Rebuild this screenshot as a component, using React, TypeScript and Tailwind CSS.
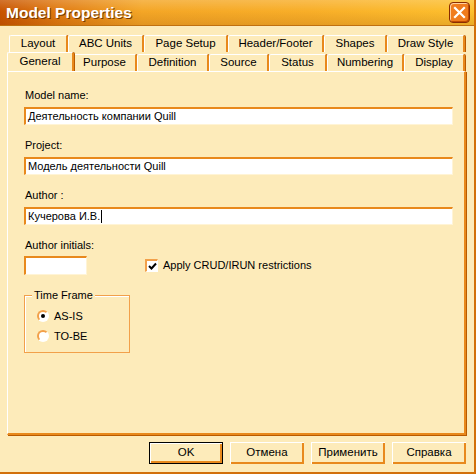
import { useState } from 'react';

const ROW1 = [
    { label: 'Layout', w: 'w-[59px]' },
    { label: 'ABC Units', w: 'w-[76px]' },
    { label: 'Page Setup', w: 'w-[84px]' },
    { label: 'Header/Footer', w: 'w-[96px]' },
    { label: 'Shapes', w: 'w-[63px]' },
    { label: 'Draw Style', w: 'w-[78px]' },
];

const ROW2 = [
    { label: 'General', w: 'w-[67px]' },
    { label: 'Purpose', w: 'w-[64px]' },
    { label: 'Definition', w: 'w-[72px]' },
    { label: 'Source', w: 'w-[60px]' },
    { label: 'Status', w: 'w-[58px]' },
    { label: 'Numbering', w: 'w-[77px]' },
    { label: 'Display', w: 'w-[61px]' },
];

function Tab({ label, w, active }: { label: string; w: string; active?: boolean }) {
    return (
        <div
            className={`${w} ${active ? 'h-[19px] z-10 -mr-[1px]' : 'h-[17px]'} flex items-center justify-center bg-[#FDEBBA] border-t border-l border-white border-r-2 border-r-[#E8891D] rounded-tl-[2px] rounded-tr-[2px] shadow-[1px_0_0_#B85A00] text-[11.5px] text-black leading-none`}
        >
            {label}
        </div>
    );
}

function Field({ label, value, caret }: { label: string; value: string; caret?: boolean }) {
    return (
        <div className="flex flex-col">
            <div className="h-[13px] leading-[13px] pl-[1px]">{label}</div>
            <div className="mt-[5px] h-[18px] w-[429px] bg-white border-t-2 border-l-2 border-[#E8891D] border-r border-b border-r-[#FFF4D6] border-b-[#FFF4D6] flex items-center pl-[2px]">
                {value}
                {caret && <span className="inline-block w-[1px] h-[13px] bg-black ml-[1px]" />}
            </div>
        </div>
    );
}

function Radio({ checked, label }: { checked?: boolean; label: string }) {
    return (
        <div className="flex items-center h-[14px]">
            <div className="w-[12px] h-[12px] rounded-full bg-white border-2 border-[#F2A04A] border-b-white border-r-white flex items-center justify-center">
                {checked && <div className="w-[4px] h-[4px] rounded-full bg-black" />}
            </div>
            <span className="ml-[5px]">{label}</span>
        </div>
    );
}

export default function App() {
    const [crud, setCrud] = useState(true);

    return (
        <div className="w-[476px] h-[474px] bg-[#FDEBBA] flex flex-col font-['Liberation_Sans',Arial,sans-serif] text-[11px] text-black overflow-hidden border-r-2 border-r-[#D2700A] border-b-2 border-b-[#D2700A]">
            {/* title bar */}
            <div className="relative h-[26px] shrink-0 bg-[linear-gradient(to_right,#C85400_0%,#E07A10_12%,#F4A626_30%,#F8AE28_65%,#FDC02E_100%)] flex items-center border-b border-b-[#C07010]">
                <div className="absolute inset-0 bg-[linear-gradient(to_bottom,rgba(255,255,255,0.18),rgba(255,255,255,0)_45%,rgba(120,50,0,0.15))]" />
                <span className="relative ml-[6px] text-[15.5px] font-bold text-white [text-shadow:1px_1px_0_#7A3A00]">Model Properties</span>
                <div className="absolute right-[4px] top-[2px] w-[21px] h-[21px] rounded-[4px] bg-[#F07C1E] border border-[#8A2C00] shadow-[inset_1px_1px_0_#FFD0A0,inset_-1px_-1px_0_#C04A00] flex items-center justify-center">
                    <svg width="13" height="13" viewBox="0 0 13 13">
                        <path d="M2 2 L11 11 M11 2 L2 11" stroke="white" strokeWidth="2.2" strokeLinecap="square" />
                    </svg>
                </div>
            </div>

            {/* tabs */}
            <div className="mt-[9px] ml-[9px] flex">
                {ROW1.map((t) => (
                    <Tab key={t.label} label={t.label} w={t.w} />
                ))}
            </div>
            <div className="ml-[7px] flex items-end h-[19px]">
                {ROW2.map((t, i) => (
                    <Tab key={t.label} label={t.label} w={t.w} active={i === 0} />
                ))}
            </div>

            {/* panel */}
            <div className="ml-[7px] w-[459px] h-[364px] border-t border-l border-white border-r-2 border-b-2 border-r-[#E8891D] border-b-[#E8891D] shadow-[1px_1px_0_#B85A00] pl-[16px] pt-[17px] flex flex-col">
                <Field label="Model name:" value="Деятельность компании Quill" />
                <div className="mt-[14px]">
                    <Field label="Project:" value="Модель деятельности Quill" />
                </div>
                <div className="mt-[14px]">
                    <Field label="Author :" value="Кучерова И.В." caret />
                </div>

                <div className="mt-[14px] h-[13px] leading-[13px] pl-[1px]">Author initials:</div>
                <div className="mt-[4px] flex items-center">
                    <div className="w-[63px] h-[19px] bg-white border-t-2 border-l-2 border-[#E8891D] border-r border-b border-r-[#FFF4D6] border-b-[#FFF4D6]" />
                    <button
                        onClick={() => setCrud(!crud)}
                        className="ml-[58px] flex items-center"
                    >
                        <div className="w-[13px] h-[13px] bg-white border-t-2 border-l-2 border-[#F2A04A] border-r border-b border-r-white border-b-white flex items-center justify-center">
                            {crud && (
                                <svg width="9" height="9" viewBox="0 0 9 9">
                                    <path d="M1 4 L3.5 6.5 L8 1.5" stroke="black" strokeWidth="2" fill="none" />
                                </svg>
                            )}
                        </div>
                        <span className="ml-[5px]">Apply CRUD/IRUN restrictions</span>
                    </button>
                </div>

                <div className="relative mt-[20px] w-[106px] h-[58px] border border-[#F2A04A] shadow-[inset_1px_1px_0_#FFFFFF] pt-[13px] pl-[12px] flex flex-col gap-[6px]">
                    <span className="absolute -top-[8px] left-[7px] px-[2px] bg-[#FDEBBA] leading-[14px]">Time Frame</span>
                    <Radio checked label="AS-IS" />
                    <Radio label="TO-BE" />
                </div>
            </div>

            {/* buttons */}
            <div className="mt-[7px] ml-[149px] flex gap-[7px]">
                {['OK', 'Отмена', 'Применить', 'Справка'].map((b, i) => (
                    <button
                        key={b}
                        className={`w-[74px] h-[22px] bg-[#FDEBBA] flex items-center justify-center text-[11.5px] ${i === 0 ? 'border border-black shadow-[inset_1px_1px_0_#FFFFFF,inset_-2px_-2px_0_#E8891D]' : 'shadow-[inset_1px_1px_0_#FFFFFF,inset_-2px_-2px_0_#E8891D]'}`}
                    >
                        {b}
                    </button>
                ))}
            </div>
        </div>
    );
}
